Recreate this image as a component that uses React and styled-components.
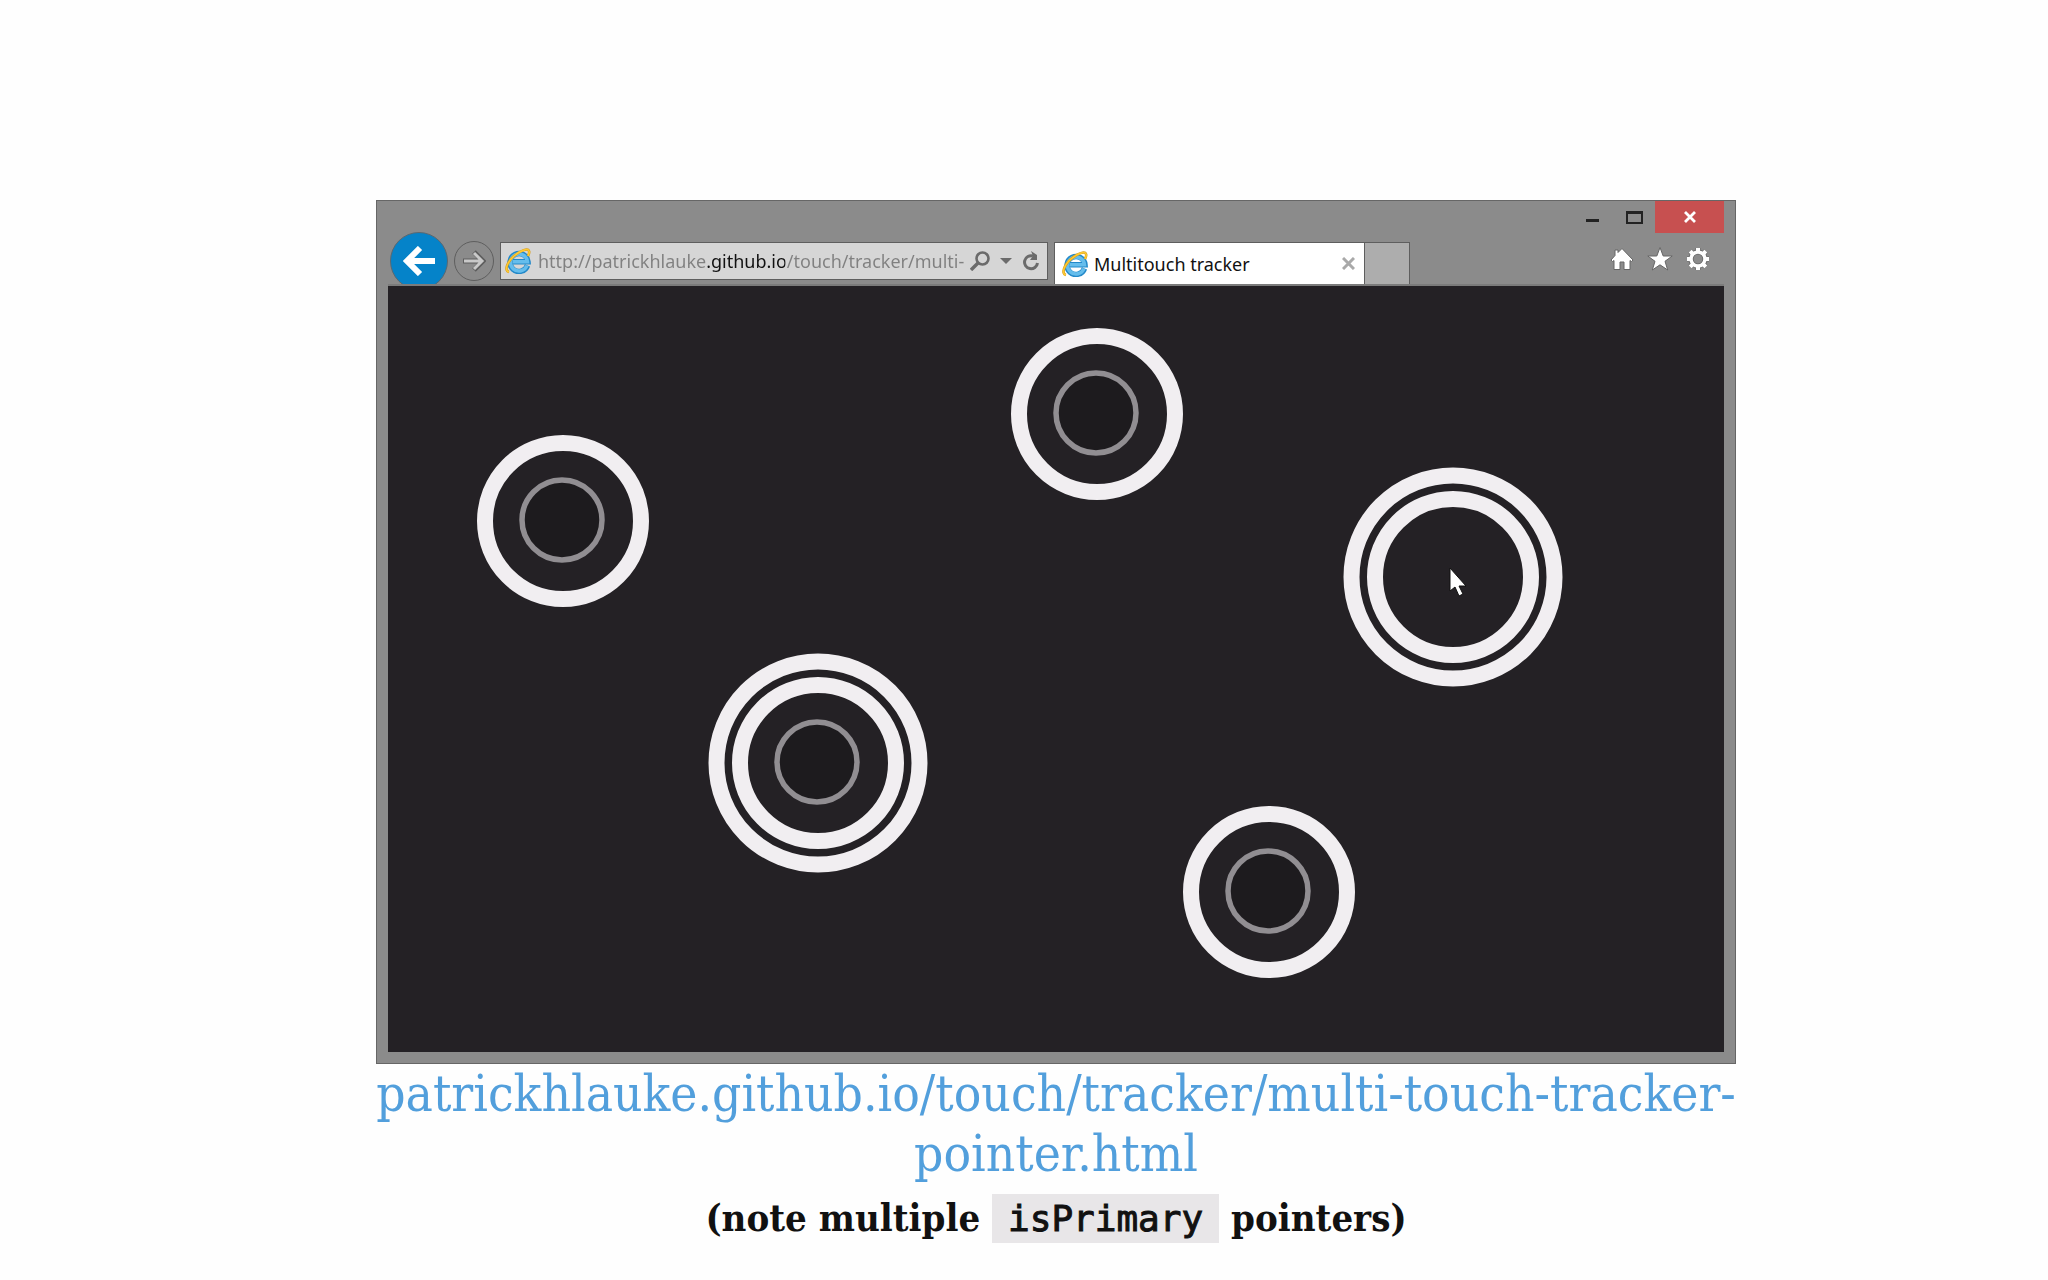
import React from 'react'
import styled, { createGlobalStyle } from 'styled-components'

const GlobalStyle = createGlobalStyle`
    * {
        box-sizing: border-box;
    }
    body {
        margin: 0;
        background-color: #fefefe;
    }
`
const Slide = styled.main`
    min-height: 100vh;
    padding: 200px 0 0 64px;
    display: flex;
    flex-direction: column;
    align-items: center;
    font-family: 'DejaVu Serif Condensed', 'DejaVu Serif', serif;
    color: #111;
`
const Browser = styled.section`
    width: 100%;
    max-width: 1360px;
    padding: 0 11px 11px;
    border: 1px solid #666;
    background-color: #8b8b8b;
    font-family: 'Noto Sans', sans-serif;
`
const Chrome = styled.header`
    overflow: hidden;
`
const TitleBar = styled.div`
    height: 32px;
    display: flex;
    justify-content: flex-end;
`
const PlainButton = styled.button`
    padding: 0;
    border: 0;
    background: none;
    display: flex;
    justify-content: center;
    align-items: center;
    flex-shrink: 0;
    cursor: pointer;
`
const WindowButton = styled(PlainButton)`
    width: ${props => (props.$close ? 69 : 42)}px;
    height: 32px;
    background-color: ${props => (props.$close ? '#c75050' : 'transparent')};
`
const NavBar = styled.div`
    height: 51px;
    display: flex;
    align-items: flex-end;
    gap: 6px;
    padding-left: 2px;
`
const BackButton = styled(PlainButton)`
    width: 58px;
    height: 58px;
    margin-bottom: -6px;
    border: 1px solid #5c6870;
    border-radius: 50%;
    background-color: #0583c9;
`
const ForwardButton = styled(PlainButton)`
    width: 40px;
    height: 40px;
    margin-bottom: 3px;
    border: 1px solid #5e5e5e;
    border-radius: 50%;
`
const AddressBar = styled.div`
    flex: 0 1 548px;
    min-width: 0;
    height: 38px;
    margin-bottom: 4px;
    padding: 0 7px 0 4px;
    border: 1px solid #5e5e5e;
    background-color: #d6d6d6;
    display: flex;
    align-items: center;
    gap: 3px;
`
// the domain part of the address is darker than the rest
const AddressInput = styled.input`
    flex: 1;
    min-width: 0;
    height: 30px;
    padding: 0 0 0 4px;
    border: 0;
    outline: 0;
    font: 18px 'Noto Sans', sans-serif;
    background-image: linear-gradient(90deg, #808080 173px, #111 173px, #111 251px, #808080 251px);
    background-clip: text;
    -webkit-background-clip: text;
    -webkit-text-fill-color: transparent;
`
const AddressTools = styled.div`
    display: flex;
    align-items: center;
    gap: 10px;
`
const Tabs = styled.div`
    display: flex;
    height: 42px;
    border: 1px solid #5e5e5e;
    border-bottom: 0;
`
const Tab = styled.div`
    width: 310px;
    padding: 0 9px 0 7px;
    border-right: 1px solid #5e5e5e;
    background-color: #fff;
    display: flex;
    align-items: center;
    gap: 6px;
`
const TabTitle = styled.span`
    flex: 1;
    font-size: 18px;
    line-height: 24px;
    white-space: nowrap;
    color: #111;
`
const NewTab = styled(PlainButton)`
    width: 44px;
    background-color: #adadad;
`
const Tools = styled.div`
    height: 50px;
    margin-left: auto;
    padding-right: 14px;
    display: flex;
    align-items: center;
    gap: 13px;
`
const Viewport = styled.div`
    border-top: 2px solid #7b7b7b;
    background-color: #242125;
`
const Tracker = styled.svg`
    display: block;
    width: 100%;
`
const Caption = styled.p`
    width: 100%;
    max-width: 1376px;
    margin: 0;
    text-align: center;
    font-size: 51px;
    line-height: 60px;
`
const DemoLink = styled.a`
    color: #529fdc;
    text-decoration: none;
`
const Note = styled.strong`
    font-size: 38px;
`
const Code = styled.code`
    padding: 4px 16px;
    background-color: #e8e6e8;
    font: 36px 'DejaVu Sans Mono', monospace;
    -webkit-text-stroke: 1px #111;
`

const touches = [
    { x: 175, y: 235, finger: true },
    { x: 709, y: 128, finger: true },
    { x: 430, y: 477, finger: true, primary: true },
    { x: 1065, y: 291, primary: true },
    { x: 881, y: 606, finger: true },
]

function IeLogo() {
    return (
        <svg width='26' height='26' viewBox='0 0 26 26' fill='none'>
            <path d='M22.5 17.5A9 9 0 1 1 23 13.8H8' stroke='#2389c9' strokeWidth='5.5' />
            <path d='M22 17.5A8.5 8.5 0 1 1 22.5 13.8H8' stroke='#65bdec' strokeWidth='3.5' />
            <path d='M4 24C-1 23 2 14 9 8S23 0 24 3c.5 1 0 3-1 5' stroke='#d99c16' strokeWidth='2.6' />
            <path d='M4 24C-1 23 2 14 9 8S23 0 24 3c.5 1 0 3-1 5' stroke='#fcc934' strokeWidth='1.6' />
        </svg>
    )
}

function Touch({ x, y, finger, primary }) {
    return (
        <g transform={`translate(${x} ${y})`} fill='none'>
            {primary && <circle r='101.5' stroke='#f1eef1' strokeWidth='16' />}
            <circle r='78' stroke='#f1eef1' strokeWidth='16' />
            {finger && <circle cx='-1' cy='-1' r='40' fill='#1d1b1e' stroke='#918e92' strokeWidth='5.5' />}
        </g>
    )
}

function App() {
    return (
        <Slide>
            <GlobalStyle />
            <Browser>
                <Chrome>
                    <TitleBar>
                        <WindowButton aria-label='Minimize'>
                            <svg width='13' height='14'>
                                <path d='M0 10.5h13' stroke='#222' strokeWidth='3' />
                            </svg>
                        </WindowButton>
                        <WindowButton aria-label='Maximize'>
                            <svg width='17' height='13' fill='none' stroke='#222'>
                                <path d='M1 1v11h15V1' strokeWidth='2' />
                                <path d='M0 1.5h17' strokeWidth='3' />
                            </svg>
                        </WindowButton>
                        <WindowButton $close aria-label='Close'>
                            <svg width='14' height='12'>
                                <path d='M2 1l10 10M12 1L2 11' stroke='#fff' strokeWidth='2.8' />
                            </svg>
                        </WindowButton>
                    </TitleBar>
                    <NavBar>
                        <BackButton aria-label='Back'>
                            <svg width='34' height='30' fill='none' stroke='#fff' strokeWidth='6'>
                                <path d='M33 15H5M18 2L5 15l13 13' />
                            </svg>
                        </BackButton>
                        <ForwardButton aria-label='Forward'>
                            <svg width='24' height='22' fill='none'>
                                <path d='M1 11h19M12 2l9 9-9 9' stroke='#5e5e5e' strokeWidth='5' />
                                <path d='M2 11h18M12 3l8 8-8 8' stroke='#c9c9c9' strokeWidth='3' />
                            </svg>
                        </ForwardButton>
                        <AddressBar>
                            <IeLogo />
                            <AddressInput
                                aria-label='Address'
                                defaultValue='http://patrickhlauke.github.io/touch/tracker/multi-'
                            />
                            <AddressTools>
                                <PlainButton aria-label='Search'>
                                    <svg width='20' height='20' fill='none' stroke='#6b6b6b'>
                                        <circle cx='12.5' cy='7.5' r='6' strokeWidth='2.6' />
                                        <path d='M8 12l-7 7' strokeWidth='3.4' />
                                    </svg>
                                </PlainButton>
                                <PlainButton aria-label='Show history'>
                                    <svg width='12' height='6'>
                                        <path d='M0 0h12L6 6z' fill='#6b6b6b' />
                                    </svg>
                                </PlainButton>
                                <PlainButton aria-label='Refresh'>
                                    <svg width='18' height='20' fill='none'>
                                        <path d='M11 5a6.5 6.5 0 1 0 4.5 7' stroke='#6b6b6b' strokeWidth='3' />
                                        <path d='M9 0l6 4v5H8l3-4z' fill='#6b6b6b' />
                                    </svg>
                                </PlainButton>
                            </AddressTools>
                        </AddressBar>
                        <Tabs>
                            <Tab>
                                <IeLogo />
                                <TabTitle>Multitouch tracker</TabTitle>
                                <PlainButton aria-label='Close tab'>
                                    <svg width='13' height='13'>
                                        <path d='M1 1l11 11M12 1L1 12' stroke='#a9a9a9' strokeWidth='3' />
                                    </svg>
                                </PlainButton>
                            </Tab>
                            <NewTab aria-label='New tab' />
                        </Tabs>
                        <Tools>
                            <PlainButton aria-label='Home'>
                                <svg width='24' height='24' fill='#fff' stroke='#666' strokeWidth='1'>
                                    <path d='M12 1.5L8 5.5V3H5v5.5L1 13l1.5 1.5L4 13.5v9h6V15h4v7.5h6v-9l1.5 1L23 13z' />
                                </svg>
                            </PlainButton>
                            <PlainButton aria-label='Favorites'>
                                <svg width='26' height='24' fill='#fff' stroke='#666' strokeWidth='1'>
                                    <path d='M13 .5l3.2 8.5h9L18 14.3l2.700 8.700L13 17.8 5.3 23 8 14.3.8 9h9z' />
                                </svg>
                            </PlainButton>
                            <PlainButton aria-label='Settings'>
                                <svg width='24' height='24' fill='none'>
                                    {['#666', '#fff'].map((color, i) => (
                                        <g key={color} stroke={color}>
                                            <circle cx='12' cy='12' r='7' strokeWidth={5 - i * 1.5} />
                                            <path
                                                d='M12 1v4M12 19v4M1 12h4M19 12h4M4.2 4.2L7 7M17 17l2.8 2.8M4.2 19.8L7 17M17 7l2.8-2.8'
                                                strokeWidth={5 - i}
                                            />
                                        </g>
                                    ))}
                                </svg>
                            </PlainButton>
                        </Tools>
                    </NavBar>
                </Chrome>
                <Viewport>
                    <Tracker viewBox='0 0 1336 766'>
                        {touches.map((v, i) => (
                            <Touch key={i} {...v} />
                        ))}
                        <path
                            d='M1062 282v23l5-4 4 9 4-2-4-8h7z'
                            fill='#fff'
                            stroke='#111'
                            strokeWidth='1'
                        />
                    </Tracker>
                </Viewport>
            </Browser>
            <Caption>
                <DemoLink href='https://patrickhlauke.github.io/touch/tracker/multi-touch-tracker-pointer.html'>
                    patrickhlauke.github.io/touch/tracker/multi-touch-tracker-pointer.html
                </DemoLink>
                <br />
                <Note>
                    (note multiple <Code>isPrimary</Code> pointers)
                </Note>
            </Caption>
        </Slide>
    )
}

export default App
